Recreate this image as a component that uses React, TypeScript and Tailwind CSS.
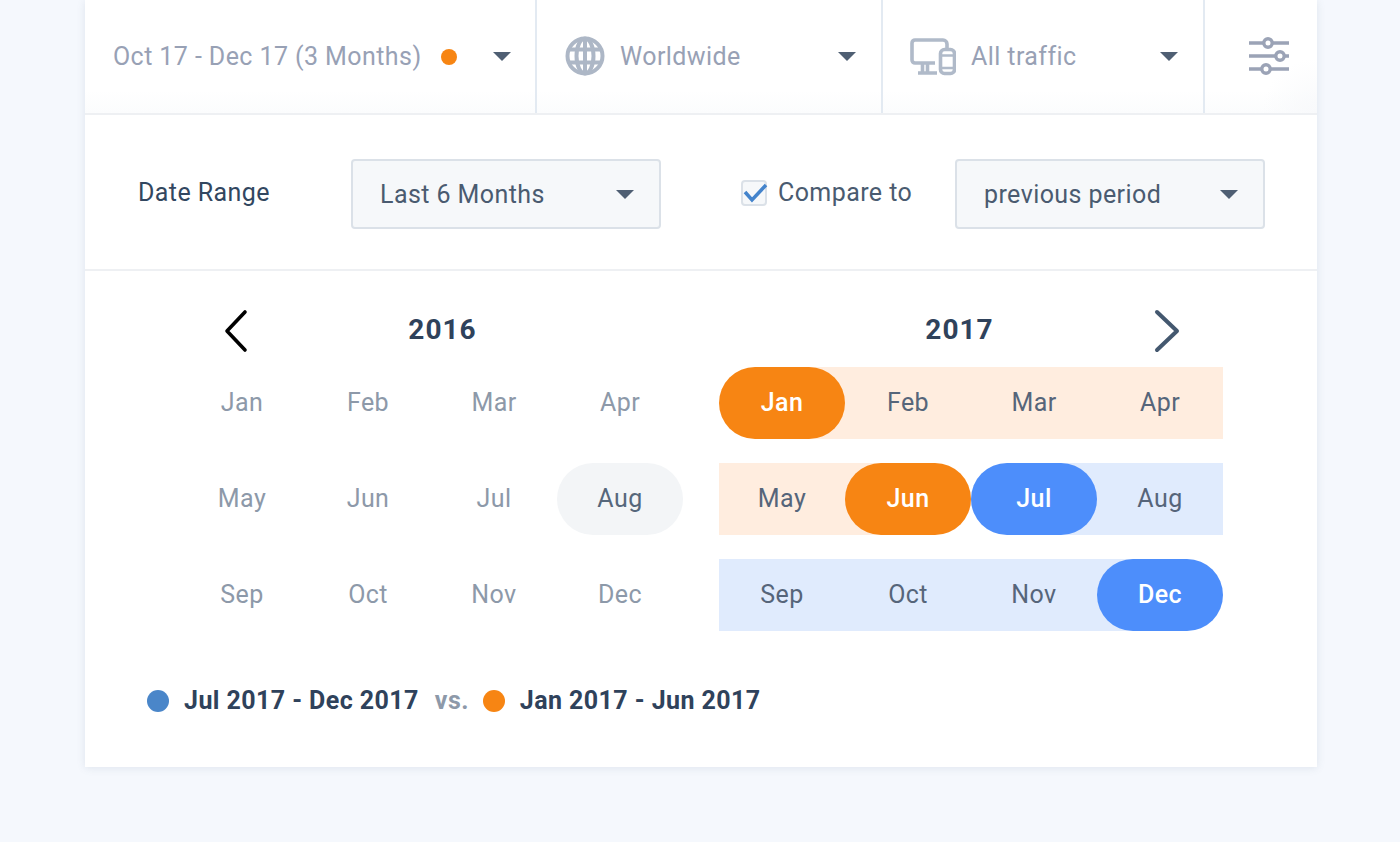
const months = ['Jan', 'Feb', 'Mar', 'Apr', 'May', 'Jun', 'Jul', 'Aug', 'Sep', 'Oct', 'Nov', 'Dec'];

const Caret = () => (
  <span className="h-0 w-0 border-x-[9px] border-t-[9px] border-x-transparent border-t-[#4f5f73]" />
);

const GlobeIcon = () => (
  <svg className="-mt-[2px]" width="40" height="40" viewBox="0 0 40 40" fill="none" stroke="#adb7c6" strokeWidth="4">
    <circle cx="20" cy="20" r="17.500" />
    <ellipse cx="20" cy="20" rx="8.500" ry="17.500" />
    <path d="M20 2.500v35M4.500 13.500h31M4.500 26.500h31" />
  </svg>
);

const DevicesIcon = () => (
  <svg width="46" height="38" viewBox="0 0 46 38" fill="none" stroke="#b0bac9" strokeWidth="3.600">
    <path d="M25 25H5a3 3 0 0 1-3-3V5a3 3 0 0 1 3-3h28a4 4 0 0 1 4 4v4" />
    <path d="M12.500 25v10M17.500 25v10M8 35h19" />
    <rect x="30.500" y="11.500" width="14" height="24" rx="4" />
    <path d="M31 17.500h13M31 30h13" strokeWidth="2.400" />
  </svg>
);

const SlidersIcon = () => (
  <svg className="-mt-[2px]" width="42" height="38" viewBox="0 0 42 38" fill="none" stroke="#9ba3b6" strokeWidth="3.400">
    <path d="M1 6h15M24 6h17M1 19h27M36 19h5M1 32h13M22 32h19" />
    <circle cx="20" cy="6" r="4.200" />
    <circle cx="32" cy="19" r="4.200" />
    <circle cx="18" cy="32" r="4.200" />
  </svg>
);

const Select = ({ label, width }: { label: string; width: string }) => (
  <div className={`mt-[2px] flex h-[70px] items-center justify-between rounded border-2 border-[#dbe1e8] bg-[#f6f8fa] pl-[27px] pr-[25px] text-[25px] text-[#4a5b70] ${width}`}>
    <span className="pt-[2px]">{label}</span>
    <Caret />
  </div>
);

const styleFor = (year: number, month: string) => {
  if (year === 2016) {
    return month === 'Aug' ? 'rounded-full bg-[#f3f5f7] text-[#56677b]' : 'text-[#8d99a9]';
  }
  if (month === 'Jan' || month === 'Jun') return 'rounded-full bg-[#f78513] font-medium text-white';
  if (month === 'Jul' || month === 'Dec') return 'rounded-full bg-[#4d8efb] font-medium text-white';
  return 'text-[#56657a]';
};

const cellBackground = (month: string) => {
  const index = months.indexOf(month);
  if (index === 0) return 'rounded-l-full bg-[linear-gradient(90deg,transparent_50%,#ffeddf_50%)]';
  if (index < 5) return 'bg-[#ffeddf]';
  if (index === 5) return 'bg-[linear-gradient(90deg,#ffeddf_50%,transparent_50%)]';
  if (index === 6) return 'bg-[linear-gradient(90deg,transparent_50%,#e0ebfd_50%)]';
  if (index === 11) return 'bg-[linear-gradient(90deg,#e0ebfd_50%,transparent_50%)]';
  return 'bg-[#e0ebfd]';
};

const MonthGrid = ({ year }: { year: number }) => (
  <div className="grid w-[504px] grid-cols-4 gap-y-6">
    {months.map((month) => (
      <div key={month} className={year === 2017 ? cellBackground(month) : ''}>
        <div className={`flex h-[72px] items-center justify-center text-[25px] ${styleFor(year, month)}`}>
          {month}
        </div>
      </div>
    ))}
  </div>
);

export default function App() {
  return (
    <div className="h-[842px] overflow-hidden bg-[#f5f8fd] px-[85px] font-['Roboto',sans-serif] tracking-[0.42px]">
      <div className="h-[767px] w-[1232px] bg-white shadow-[0_1px_8px_rgba(90,110,140,0.14)]">
        <div className="flex h-[115px] border-b-2 border-[#eef0f3] bg-gradient-to-b from-white from-80% to-[#fbfcfd] text-[25px] text-[#98a1b5]">
          <div className="flex w-[452px] items-center border-r-2 border-[#e3eaf2] pl-7 pr-6">
            <span>Oct 17 - Dec 17 (3 Months)</span>
            <span className="ml-[19px] h-4 w-4 rounded-full bg-[#f78513]" />
            <span className="ml-auto flex"><Caret /></span>
          </div>
          <div className="flex w-[346px] items-center border-r-2 border-[#e3eaf2] pl-7 pr-[25px]">
            <GlobeIcon />
            <span className="ml-[15px]">Worldwide</span>
            <span className="ml-auto flex"><Caret /></span>
          </div>
          <div className="flex w-[322px] items-center border-r-2 border-[#e3eaf2] pl-[27px] pr-[25px]">
            <DevicesIcon />
            <span className="ml-[15px]">All traffic</span>
            <span className="ml-auto flex"><Caret /></span>
          </div>
          <div className="flex flex-1 items-center justify-center bg-[radial-gradient(circle_at_100%_100%,#f8f9fb,transparent_55px)] pl-[16px]">
            <SlidersIcon />
          </div>
        </div>

        <div className="flex h-[156px] items-center border-b-2 border-[#eef0f3] pt-[2px] pl-[53px]">
          <span className="w-[213px] text-[25px] text-[#324760]">Date Range</span>
          <Select label="Last 6 Months" width="w-[310px]" />
          <label className="ml-20 flex w-[214px] items-center text-[25px] text-[#4a5b70]">
            <span className="relative mr-[11px] h-[26px] w-[26px] rounded border-2 border-[#dbe1e8] bg-[#f6f8fa]">
              <svg className="absolute -top-[3px] -left-[1px]" width="28" height="26" viewBox="0 0 28 26" fill="none" stroke="#4484cc" strokeWidth="3.500">
                <path d="M3 13l7 8L24 6" />
              </svg>
            </span>
            Compare to
          </label>
          <Select label="previous period" width="w-[310px]" />
        </div>

        <div className="px-[94px]">
          <div className="flex h-[96px] items-end">
            <div className="relative flex h-[60px] w-[504px] items-center justify-center pb-[14px] pl-[23px] text-[28px] font-bold tracking-[1px] text-[#2f425b]">
              <svg className="absolute left-[45px] mt-[1px]" width="24" height="44" viewBox="0 0 24 44" fill="none" stroke="#000" strokeWidth="3.600" strokeLinecap="round" strokeLinejoin="round">
                <path d="M21 3L3 22l18 19" />
              </svg>
              2016
            </div>
            <div className="relative ml-9 flex h-[60px] w-[504px] items-center justify-center pr-[23px] pb-[14px] text-[28px] font-bold tracking-[1px] text-[#2f425b]">
              2017
              <svg className="absolute right-[43px] mt-[1px]" width="26" height="44" viewBox="0 0 26 44" fill="none" stroke="#44586f" strokeWidth="4" strokeLinecap="round" strokeLinejoin="round">
                <path d="M3 3l20 19L3 41" />
              </svg>
            </div>
          </div>
          <div className="flex gap-9">
            <MonthGrid year={2016} />
            <MonthGrid year={2017} />
          </div>
        </div>

        <div className="mt-[51px] flex items-center pl-[62px] text-[25px] font-bold text-[#2f425b]">
          <span className="mr-[15px] h-[22px] w-[22px] rounded-full bg-[#4a86c9]" />
          Jul 2017 - Dec 2017
          <span className="ml-4 mr-[14px] text-[#8d99a9]">vs.</span>
          <span className="mr-[15px] h-[22px] w-[22px] rounded-full bg-[#f78513]" />
          Jan 2017 - Jun 2017
        </div>
      </div>
    </div>
  );
}
